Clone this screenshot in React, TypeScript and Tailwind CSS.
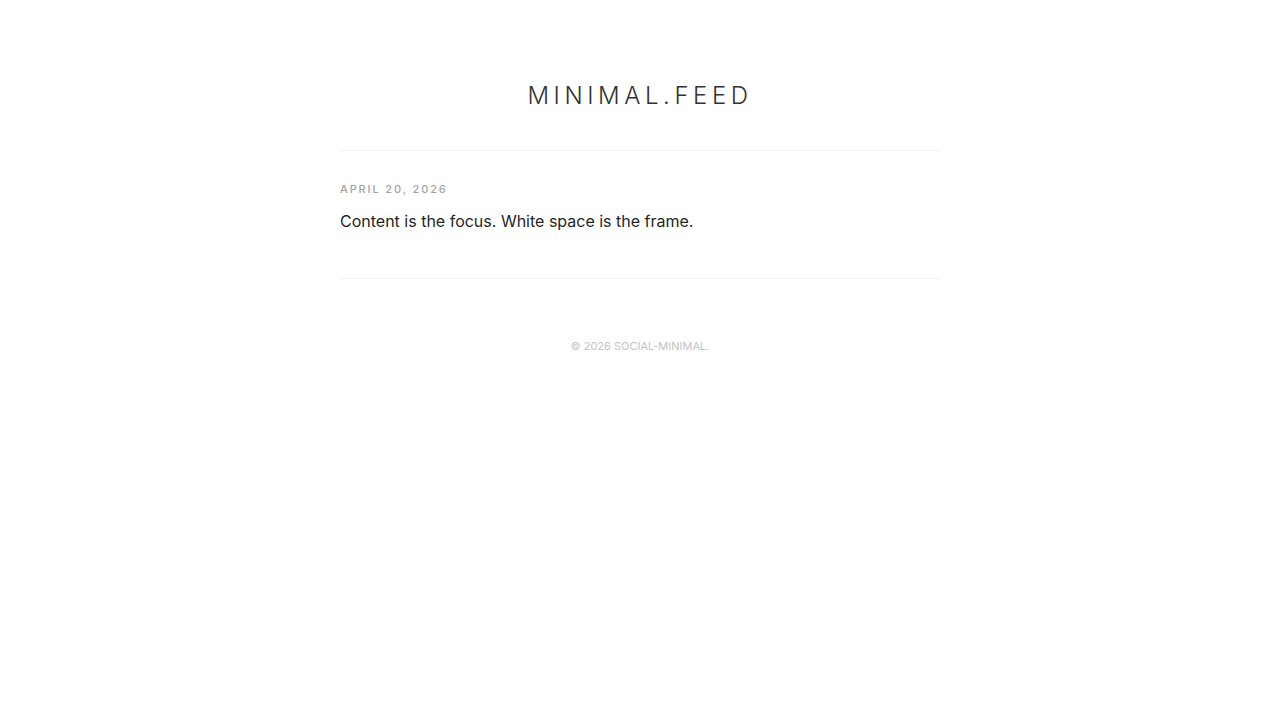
import React from 'react';

const posts = [
  { date: 'April 20, 2026', body: 'Content is the focus. White space is the frame.' },
];

export default function App() {
  return (
    <div className="min-h-screen bg-white font-['Inter','Noto_Sans',sans-serif] text-[#262626]">
      <div className="mx-auto w-[600px]">
        {/* Header */}
        <header className="border-b border-[#f0f0f0] pt-[80px] pb-[38px] text-center">
          <h1 className="text-[24px] leading-[32px] font-light tracking-[0.19em] text-[#333]">
            MINIMAL.FEED
          </h1>
        </header>

        {/* Feed */}
        <main>
          {posts.map((post) => (
            <article key={post.date} className="border-b border-[#f0f0f0] pt-[30px] pb-[43px]">
              <div className="text-[11px] leading-[16px] font-medium uppercase tracking-[0.17em] text-[#a3a3a3]">
                {post.date}
              </div>
              <p className="mt-[10px] text-[16px] leading-[28px] text-[#262626]">{post.body}</p>
            </article>
          ))}
        </main>

        {/* Footer */}
        <footer className="pt-[59px] text-center text-[11px] leading-[16px] uppercase text-[#c4c4c4]">
          © 2026 Social-Minimal.
        </footer>
      </div>
    </div>
  );
}
